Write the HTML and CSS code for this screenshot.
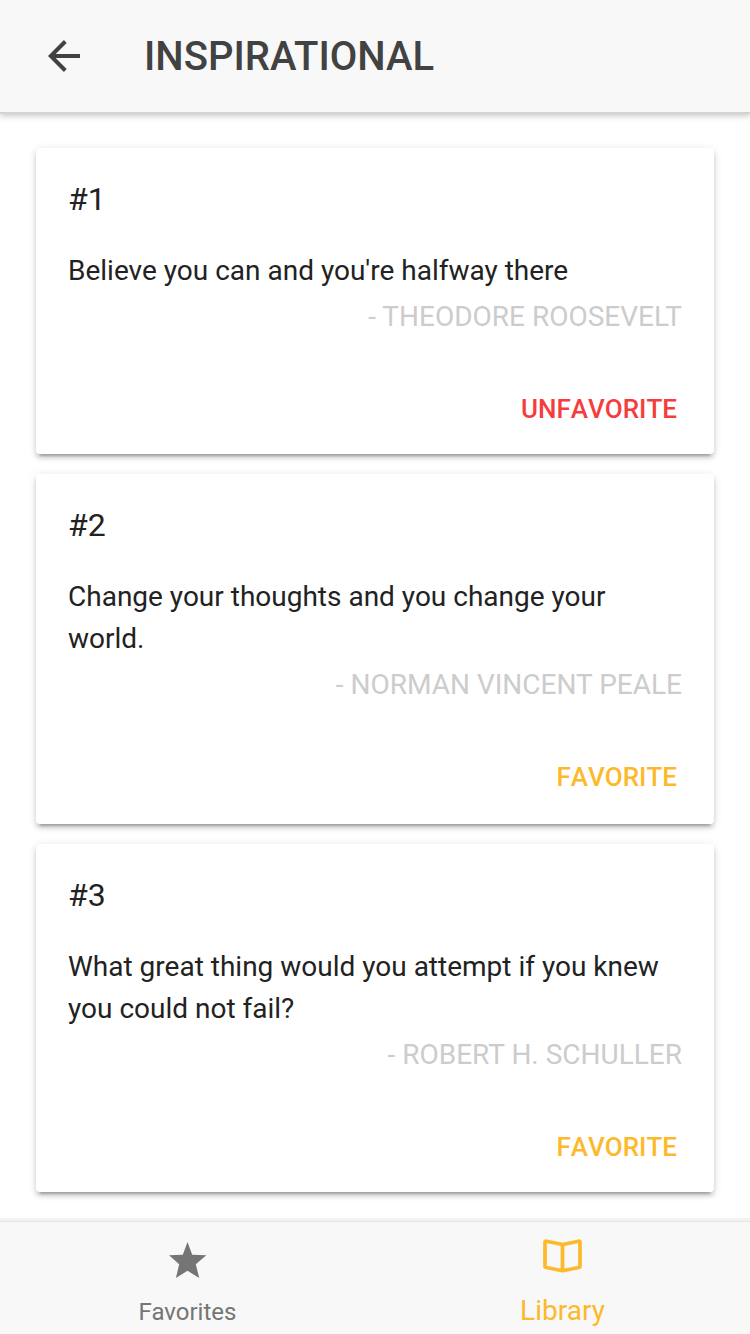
FILE: index.html
```html
<!DOCTYPE html>
<html lang="en">
<head>
<meta charset="utf-8">
<title>Inspirational</title>
<link rel="stylesheet" href="styles.css">
</head>
<body>
<header class="toolbar">
  <svg class="back" viewBox="0 0 32 32" width="32" height="32"><path d="M32 14H7.700L18.700 2.900 15.900 0 0 16l15.900 16 2.800-2.900L7.700 18H32z"/></svg>
  <h1 class="title">INSPIRATIONAL</h1>
</header>
<main class="content">
  <article class="card">
    <h2 class="number">#1</h2>
    <p class="quote">Believe you can and you're halfway there</p>
    <p class="author">- THEODORE ROOSEVELT</p>
    <button class="action danger">UNFAVORITE</button>
  </article>
  <article class="card tall">
    <h2 class="number">#2</h2>
    <p class="quote">Change your thoughts and you change your world.</p>
    <p class="author">- NORMAN VINCENT PEALE</p>
    <button class="action">FAVORITE</button>
  </article>
  <article class="card">
    <h2 class="number">#3</h2>
    <p class="quote">What great thing would you attempt if you knew you could not fail?</p>
    <p class="author">- ROBERT H. SCHULLER</p>
    <button class="action">FAVORITE</button>
  </article>
</main>
<nav class="tabs">
  <a class="tab">
    <svg class="star" viewBox="0 0 38 36" width="38" height="36"><path d="M18.500 0l4.700 12.800 14.100 .500-10.500 8.900 3.400 13.800-11.700-7.300L6.900 36l3.300-13.800L0 13.300l13.800-.500z"/></svg>
    <span class="label">Favorites</span>
  </a>
  <a class="tab selected">
    <svg class="book" viewBox="0 0 40 34" width="40" height="34"><path d="M19.500 5.500L3.300 2.200Q2 2 2 3.500V27q0 1.300 1.300 1.500l16.200 3.200L35.700 28.500q1.300-.200 1.300-1.500V3.500Q37 2 35.700 2.200zM19.500 5.500v26"/></svg>
    <span class="label">Library</span>
  </a>
</nav>
</body>
</html>
```
FILE: styles.css
```css
* { box-sizing: border-box; }
body { margin: 0; height: 1334px; display: flex; flex-direction: column; overflow: hidden; background: #fff; color: #222; font-family: Roboto, sans-serif; }
h1, h2, p { margin: 0; font-weight: 400; }
.toolbar { flex: none; height: 112px; display: flex; align-items: center; padding-left: 48px; background: #f8f8f8; box-shadow: 0 2px 0 #d3d3d3, 0 4px 6px rgba(0,0,0,.22); }
.back { fill: #424242; }
.title { margin-left: 64px; padding-top: 2px; font-size: 40px; font-weight: 500; line-height: 48px; color: #424242; }
.content { flex: 1; display: flex; flex-direction: column; gap: 20px; padding: 36px 36px 0; }
.card { display: flex; flex-direction: column; padding: 32px 32px 9px; border-radius: 4px; background: #fff; box-shadow: 0 4px 4px rgba(0,0,0,.14), 0 6px 2px -4px rgba(0,0,0,.2), 0 2px 10px rgba(0,0,0,.12); }
.tall { padding-bottom: 11px; }
.number { font-size: 32px; line-height: 38px; }
.quote { margin-top: 32px; font-size: 28px; line-height: 42px; }
.author { margin-top: 4px; font-size: 28px; line-height: 42px; text-align: right; color: #ccc; }
.action { align-self: flex-end; margin-top: 35px; height: 72px; padding: 0 5px; border: 0; background: none; font: 500 26px/72px Roboto, sans-serif; font-kerning: none; color: #fdb92c; }
.danger { color: #f53d3d; }
.tabs { flex: none; display: flex; height: 116px; border-top: 3px solid #f2f2f2; background: #f8f8f8; box-shadow: inset 0 1px 0 #e4e4e4; }
.tab { flex: 1; display: flex; flex-direction: column; align-items: center; color: #757575; }
.star { margin-top: 21px; fill: currentColor; }
.label { margin-top: 19px; font-size: 24px; line-height: 30px; }
.selected { color: #fdb92c; }
.selected .label { margin-top: 23px; font-size: 28px; }
.book { margin-top: 18px; fill: none; stroke: currentColor; stroke-width: 3.700; stroke-linejoin: round; }
```
